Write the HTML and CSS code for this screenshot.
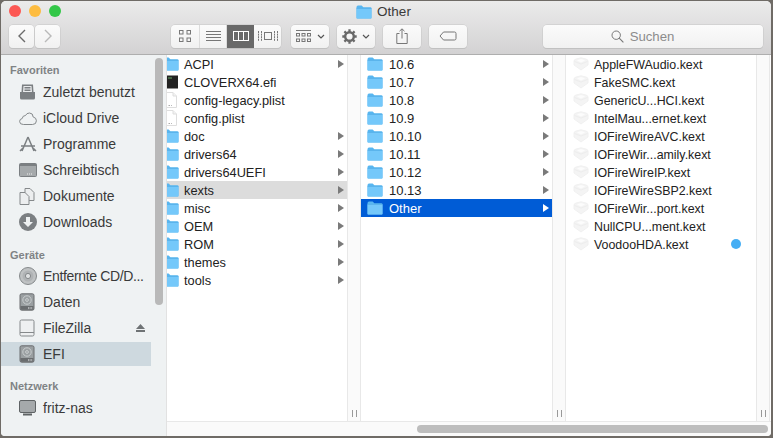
FILE: index.html
```html
<!DOCTYPE html>
<html lang="de">
<head>
<meta charset="utf-8">
<title>Other</title>
<link rel="stylesheet" href="styles.css">
</head>
<body>
<svg class="defs" width="0" height="0" aria-hidden="true">
  <defs>
    <symbol id="folder" viewBox="0 0 16 14">
      <path d="M0.5 2.2Q0.5 0.6 2 0.6H5.6L7.4 2.2H14.2Q15.5 2.2 15.5 3.6V12.4Q15.5 13.6 14.2 13.6H1.8Q0.5 13.6 0.5 12.4Z" fill="#58b6f0"/>
      <path d="M0.5 3.4H15.5V12.4Q15.5 13.6 14.2 13.6H1.8Q0.5 13.6 0.5 12.4Z" fill="#74c8fa"/>
      <path d="M0.5 3.4H15.5" stroke="#4fa9e4" stroke-width=".6"/>
    </symbol>
    <symbol id="doc" viewBox="0 0 14 16">
      <path d="M2.5 .5H9L12.5 4V15.5H2.5Z" fill="#fff" stroke="#dedede"/>
      <path d="M9 .5V4H12.5" fill="#f3f3f3" stroke="#dedede"/>
      <path d="M4.5 13.5H6M7 13.5H7.8" stroke="#aaa"/>
    </symbol>
    <symbol id="kext" viewBox="0 0 16 14">
      <path d="M1 4Q1 2.500 3 2L8 .8L13 2Q15 2.500 15 4V8L8 13L1 8Z" fill="#f4f4f4" stroke="#f0f0f0"/>
      <path d="M1.500 4.500L8 7L14.500 4.500" fill="none" stroke="#ededed"/>
      <path d="M4 3.600L8 5.400L12 3.600L8 2Z" fill="#fcfcfc"/>
    </symbol>
    <symbol id="disk" viewBox="0 0 16 18">
      <rect x="1" y=".8" width="14" height="16.4" rx="1.6" fill="#9a9fa1" stroke="#6a6d6f"/>
      <rect x="1.5" y="13" width="13" height="3.8" fill="#6a6d6f"/>
      <circle cx="8" cy="7" r="4.2" fill="none" stroke="#c9cdce"/>
      <circle cx="8" cy="7" r="1.4" fill="none" stroke="#c9cdce"/>
      <path d="M9 14.6H13.4M9 15.6H13.4" stroke="#b5b8ba" stroke-dasharray="1 .6"/>
    </symbol>
  </defs>
</svg>
<div class="window">
  <header class="chrome">
    <div class="titlebar">
      <div class="lights">
        <span class="light red"></span><span class="light yellow"></span><span class="light green"></span>
      </div>
      <div class="title">
        <svg class="title-folder" width="16" height="14"><use href="#folder"/></svg>
        <span>Other</span>
      </div>
    </div>
    <div class="toolbar">
      <div class="btn-group nav">
        <button class="btn back"><svg width="10" height="14" viewBox="0 0 10 14"><path d="M8 1L2 7L8 13" fill="none" stroke="#6b6b6b" stroke-width="1.4"/></svg></button>
        <button class="btn fwd"><svg width="10" height="14" viewBox="0 0 10 14"><path d="M2 1L8 7L2 13" fill="none" stroke="#b9b9b9" stroke-width="1.4"/></svg></button>
      </div>
      <div class="view-group">
        <button class="view v1"><svg width="14" height="14" viewBox="0 0 14 14"><g fill="none" stroke="#777"><rect x="1.5" y="1.5" width="3.500" height="3.500"/><rect x="9" y="1.5" width="3.500" height="3.500"/><rect x="1.5" y="9" width="3.500" height="3.500"/><rect x="9" y="9" width="3.500" height="3.500"/></g></svg></button>
        <button class="view v2"><svg width="15" height="13" viewBox="0 0 15 13"><path d="M0 1.5H15M0 4.5H15M0 7.5H15M0 10.5H15" stroke="#777"/></svg></button>
        <button class="view v3 on"><svg width="16" height="12" viewBox="0 0 16 12"><g fill="none" stroke="#fff"><rect x=".5" y="1.5" width="15" height="9"/><path d="M5.5 1.5V10.5M10.5 1.5V10.5"/></g></svg></button>
        <button class="view v4"><svg width="20" height="12" viewBox="0 0 20 12"><g fill="none" stroke="#777"><rect x="6.5" y="2.5" width="7" height="7"/><path d="M.5 1V11M3.5 1V11M16.5 1V11M19.5 1V11" stroke-dasharray="2 .6"/></g></svg></button>
      </div>
      <button class="btn arrange"><svg width="15" height="14" viewBox="0 0 15 14"><g fill="none" stroke="#777"><path d="M0 1.5H15" /><rect x=".5" y="4.5" width="3" height="2.5"/><rect x="6" y="4.5" width="3" height="2.5"/><rect x="11.5" y="4.5" width="3" height="2.5"/><rect x=".5" y="10" width="3" height="2.5"/><rect x="6" y="10" width="3" height="2.5"/><rect x="11.5" y="10" width="3" height="2.5"/></g></svg><svg class="chev" width="8" height="5" viewBox="0 0 8 5"><path d="M1 1L4 4L7 1" fill="none" stroke="#555" stroke-width="1.2"/></svg></button>
      <button class="btn action"><svg width="15" height="15" viewBox="0 0 15 15"><circle cx="7.5" cy="7.5" r="4.300" fill="none" stroke="#6a6a6a" stroke-width="2.400"/><path d="M7.500 .3V14.700M.3 7.500H14.700M2.400 2.400L12.600 12.600M12.600 2.400L2.400 12.600" stroke="#6a6a6a" stroke-width="2.300" stroke-dasharray="3 8.500 3 0"/></svg><svg class="chev" width="8" height="5" viewBox="0 0 8 5"><path d="M1 1L4 4L7 1" fill="none" stroke="#555" stroke-width="1.2"/></svg></button>
      <button class="btn share"><svg width="12" height="16" viewBox="0 0 12 16"><path d="M3.5 5.5H.8V15.5H11.2V5.5H8.5M6 10.5V1M3.5 3.2L6 .8L8.5 3.2" fill="none" stroke="#777"/></svg></button>
      <button class="btn tag"><svg width="18" height="10" viewBox="0 0 18 10"><path d="M4.5 1H15.5Q17 1 17 2.5V7.5Q17 9 15.5 9H4.5L1 5Z" fill="none" stroke="#777"/></svg></button>
      <div class="search">
        <svg width="13" height="13" viewBox="0 0 13 13"><circle cx="5.2" cy="5.2" r="4.2" fill="none" stroke="#777"/><path d="M8.2 8.2L12.4 12.4" stroke="#777" stroke-width="1.1"/></svg>
        <span>Suchen</span>
      </div>
    </div>
  </header>
  <div class="body">
    <aside class="sidebar">
      <div class="scroll-thumb"></div>
      <div class="side-head first">Favoriten</div>
      <div class="side-row"><svg class="sic" width="17" height="16" viewBox="0 0 17 16"><path d="M3 .5H14L14.5 8H16V14Q16 15.5 14.5 15.5H2.500Q1 15.500 1 14V8H2.500Z" fill="#7b7f82"/><path d="M4.500 2H12.500L13 8H4Z" fill="#e8eaeb"/><path d="M5.500 3.500H11.500M5.500 5H11.500M5.500 6.500H11.500" stroke="#7b7f82"/></svg><span>Zuletzt benutzt</span></div>
      <div class="side-row"><svg class="sic" width="18" height="13" viewBox="0 0 18 13"><path d="M4.500 12.500Q.6 12.500.6 9.500Q.6 7 3.200 6.500Q3.600 3.500 6.500 3.500Q7.500 1 10.500 1Q14 1 14.200 5Q17.400 5.600 17.400 8.800Q17.400 12.500 13.500 12.500Z" fill="none" stroke="#85898b"/></svg><span>iCloud Drive</span></div>
      <div class="side-row"><svg class="sic" width="18" height="17" viewBox="0 0 18 17"><path d="M9 1L3 15M9 1L15 15M2 10H16M1 15L4 12M17 15L14 12" fill="none" stroke="#7b7f82" stroke-width="1.500"/></svg><span>Programme</span></div>
      <div class="side-row"><svg class="sic" width="18" height="14" viewBox="0 0 18 14"><rect x=".5" y=".5" width="17" height="13" rx="1" fill="#a5a9ab" stroke="#7b7f82"/><rect x="1" y="1" width="16" height="2" fill="#7b7f82"/><path d="M8 11H13" stroke="#eee" stroke-dasharray="1 1"/></svg><span>Schreibtisch</span></div>
      <div class="side-row"><svg class="sic" width="16" height="17" viewBox="0 0 16 17"><path d="M6 .5H11L15 4.500V12.500H6Z" fill="#eceeef" stroke="#85898b"/><path d="M1 4.500H6L10 8.500V16.500H1Z" fill="#eceeef" stroke="#85898b"/></svg><span>Dokumente</span></div>
      <div class="side-row"><svg class="sic" width="18" height="18" viewBox="0 0 18 18"><circle cx="9" cy="9" r="9" fill="#7b7f82"/><path d="M7 4H11V9H14L9 14L4 9H7Z" fill="#eef1f2"/></svg><span>Downloads</span></div>
      <div class="side-head">Geräte</div>
      <div class="side-row"><svg class="sic" width="18" height="18" viewBox="0 0 18 18"><circle cx="9" cy="9" r="8.500" fill="#bfc2c3" stroke="#85898b"/><circle cx="9" cy="9" r="5.500" fill="#b0b3b5"/><circle cx="9" cy="9" r="2.600" fill="#dfe1e2" stroke="#85898b"/></svg><span class="tight">Entfernte CD/D...</span></div>
      <div class="side-row"><svg class="sic" width="16" height="18"><use href="#disk"/></svg><span>Daten</span></div>
      <div class="side-row"><svg class="sic" width="16" height="18" viewBox="0 0 16 18"><path d="M2.500 1H13.500Q15 1 15 2.500V15.500Q15 17 13.500 17H2.500Q1 17 1 15.500V2.500Q1 1 2.500 1Z" fill="#eef0f1" stroke="#85898b"/><path d="M1 13.500H15" stroke="#85898b"/></svg><span>FileZilla</span><svg class="eject" width="9" height="8" viewBox="0 0 9 8"><path d="M4.500 0L9 5H0Z M0 6H9V8H0Z" fill="#6f7375"/></svg></div>
      <div class="side-row sel"><svg class="sic" width="16" height="18"><use href="#disk"/></svg><span>EFI</span></div>
      <div class="side-head net">Netzwerk</div>
      <div class="side-row"><svg class="sic" width="17" height="16" viewBox="0 0 17 16"><rect x=".5" y=".5" width="16" height="12" rx="1.500" fill="#a5a9ab" stroke="#5f6365"/><path d="M4 14.500H13" stroke="#5f6365" stroke-width="2"/></svg><span>fritz-nas</span></div>
    </aside>
    <main class="browser">
      <div class="columns">
        <section class="col c1">
          <div class="rows">
            <div class="row"><svg class="ic"><use href="#folder"/></svg><span class="nm">ACPI</span><i class="arr"></i></div>
            <div class="row"><svg class="ic" viewBox="0 0 16 14"><rect x="1" y=".5" width="14" height="13" fill="#222"/><path d="M5 3H9" stroke="#7c7" stroke-width=".8"/></svg><span class="nm">CLOVERX64.efi</span></div>
            <div class="row"><svg class="ic doc"><use href="#doc"/></svg><span class="nm">config-legacy.plist</span></div>
            <div class="row"><svg class="ic doc"><use href="#doc"/></svg><span class="nm">config.plist</span></div>
            <div class="row"><svg class="ic"><use href="#folder"/></svg><span class="nm">doc</span><i class="arr"></i></div>
            <div class="row"><svg class="ic"><use href="#folder"/></svg><span class="nm">drivers64</span><i class="arr"></i></div>
            <div class="row"><svg class="ic"><use href="#folder"/></svg><span class="nm">drivers64UEFI</span><i class="arr"></i></div>
            <div class="row hl"><svg class="ic"><use href="#folder"/></svg><span class="nm">kexts</span><i class="arr"></i></div>
            <div class="row"><svg class="ic"><use href="#folder"/></svg><span class="nm">misc</span><i class="arr"></i></div>
            <div class="row"><svg class="ic"><use href="#folder"/></svg><span class="nm">OEM</span><i class="arr"></i></div>
            <div class="row"><svg class="ic"><use href="#folder"/></svg><span class="nm">ROM</span><i class="arr"></i></div>
            <div class="row"><svg class="ic"><use href="#folder"/></svg><span class="nm">themes</span><i class="arr"></i></div>
            <div class="row"><svg class="ic"><use href="#folder"/></svg><span class="nm">tools</span><i class="arr"></i></div>
          </div>
          <div class="grip"><b></b><b></b></div>
        </section>
        <section class="col c2">
          <div class="rows">
            <div class="row"><svg class="ic"><use href="#folder"/></svg><span class="nm">10.6</span><i class="arr"></i></div>
            <div class="row"><svg class="ic"><use href="#folder"/></svg><span class="nm">10.7</span><i class="arr"></i></div>
            <div class="row"><svg class="ic"><use href="#folder"/></svg><span class="nm">10.8</span><i class="arr"></i></div>
            <div class="row"><svg class="ic"><use href="#folder"/></svg><span class="nm">10.9</span><i class="arr"></i></div>
            <div class="row"><svg class="ic"><use href="#folder"/></svg><span class="nm">10.10</span><i class="arr"></i></div>
            <div class="row"><svg class="ic"><use href="#folder"/></svg><span class="nm">10.11</span><i class="arr"></i></div>
            <div class="row"><svg class="ic"><use href="#folder"/></svg><span class="nm">10.12</span><i class="arr"></i></div>
            <div class="row"><svg class="ic"><use href="#folder"/></svg><span class="nm">10.13</span><i class="arr"></i></div>
            <div class="row on"><svg class="ic"><use href="#folder"/></svg><span class="nm">Other</span><i class="arr"></i></div>
          </div>
          <div class="grip"><b></b><b></b></div>
        </section>
        <section class="col c3">
          <div class="rows">
            <div class="row"><svg class="ic"><use href="#kext"/></svg><span class="nm">AppleFWAudio.kext</span></div>
            <div class="row"><svg class="ic"><use href="#kext"/></svg><span class="nm">FakeSMC.kext</span></div>
            <div class="row"><svg class="ic"><use href="#kext"/></svg><span class="nm">GenericU...HCI.kext</span></div>
            <div class="row"><svg class="ic"><use href="#kext"/></svg><span class="nm">IntelMau...ernet.kext</span></div>
            <div class="row"><svg class="ic"><use href="#kext"/></svg><span class="nm">IOFireWireAVC.kext</span></div>
            <div class="row"><svg class="ic"><use href="#kext"/></svg><span class="nm">IOFireWir...amily.kext</span></div>
            <div class="row"><svg class="ic"><use href="#kext"/></svg><span class="nm">IOFireWireIP.kext</span></div>
            <div class="row"><svg class="ic"><use href="#kext"/></svg><span class="nm">IOFireWireSBP2.kext</span></div>
            <div class="row"><svg class="ic"><use href="#kext"/></svg><span class="nm">IOFireWir...port.kext</span></div>
            <div class="row"><svg class="ic"><use href="#kext"/></svg><span class="nm">NullCPU...ment.kext</span></div>
            <div class="row"><svg class="ic"><use href="#kext"/></svg><span class="nm">VoodooHDA.kext</span><i class="dot"></i></div>
          </div>
          <div class="grip"><b></b><b></b></div>
        </section>
      </div>
      <div class="hscroll"><div class="hthumb"></div></div>
    </main>
  </div>
</div>
</body>
</html>
```

FILE: styles.css
```css
* { box-sizing: border-box; }
html, body { margin: 0; height: 100%; }
body {
  width: 773px;
  height: 438px;
  overflow: hidden;
  background: #6f6b66;
  font-family: "Liberation Sans", Arial, sans-serif;
  font-size: 13px;
  color: #222;
  padding: 1px 2px 2px 1px;
}
.defs { position: absolute; }
.window {
  width: 770px;
  height: 435px;
  border-radius: 5px 5px 4px 4px;
  overflow: hidden;
  display: flex;
  flex-direction: column;
  background: #fff;
}
.chrome {
  height: 54px;
  flex: none;
  background: linear-gradient(#ebebeb, #d3d2d3);
  border-bottom: 1px solid #aeaeae;
}
.titlebar { height: 22px; position: relative; display: flex; justify-content: center; align-items: center; }
.lights { position: absolute; left: 8px; top: 4px; display: flex; gap: 8px; }
.light { width: 12px; height: 12px; border-radius: 50%; }
.red { background: #fc5753; }
.yellow { background: #fdbc40; }
.green { background: #33c748; }
.title { display: flex; align-items: center; gap: 5px; font-size: 13.5px; color: #3a3a3a; margin-left: -5px; margin-top: -1px; }
.toolbar { display: flex; align-items: center; height: 24px; margin-top: 1px; padding-left: 8px; }
button { padding: 0; margin: 0; font: inherit; }
.btn, .view-group, .search {
  height: 23px;
  background: linear-gradient(#fbfbfb, #f1f1f1);
  border: none;
  border-radius: 4px;
  box-shadow: 0 0 0 .5px #c6c6c6, 0 1px 0 #bdbdbd;
  display: flex;
  align-items: center;
  justify-content: center;
}
.btn-group.nav { display: flex; gap: 1px; }
.back, .fwd { width: 25px; }
.view-group { margin-left: 111px; overflow: hidden; width: 110px; justify-content: flex-start; }
.view { height: 23px; border: none; background: none; display: flex; align-items: center; justify-content: center; border-right: 1px solid #dcdcdc; }
.v1 { width: 29px; }
.v2 { width: 27px; }
.v3 { width: 27px; }
.v4 { width: 27px; border-right: none; }
.view.on { background: #696969; border-right: none; }
.arrange { width: 38px; margin-left: 10px; gap: 6px; }
.action { width: 38px; margin-left: 8px; gap: 5px; }
.share { width: 38px; margin-left: 8px; }
.tag { width: 38px; margin-left: 8px; }
.search { width: 220px; margin-left: 76px; gap: 6px; color: #8c8c8c; font-size: 13.200px; padding-right: 21px; }
.body { flex: 1; display: flex; min-height: 0; }
.sidebar {
  width: 166px;
  flex: none;
  position: relative;
  background: #eff2f3;
  padding-top: 7px;
  border-right: 1px solid #e2e2e2;
}
.scroll-thumb { position: absolute; left: 154px; top: 3px; width: 8px; height: 247px; border-radius: 4px; background: #b9b9b9; }
.side-head { font-size: 11px; font-weight: 700; color: #7f8385; height: 16px; line-height: 16px; padding-left: 9px; margin-top: 12px; }
.side-head.first { margin-top: 0; height: 17px; }
.side-head.net { margin-top: 11px; height: 17px; }
.side-row { height: 26px; width: 150px; display: flex; align-items: center; color: #3a3a3a; font-size: 14px; position: relative; padding-left: 18px; }
.side-row span { position: absolute; left: 42px; white-space: nowrap; }
.side-row .tight { letter-spacing: -.35px; }
.sic { flex: none; }
.sel { background: linear-gradient(#ced9df, #ced9df) no-repeat center / 100% 24px; }
.eject { position: absolute; left: 135px; top: 9px; }
.browser { flex: 1; min-width: 0; display: flex; flex-direction: column; }
.columns { flex: 1; display: flex; min-height: 0; }
.col { display: flex; position: relative; height: 100%; }
.c1 { width: 194px; font-size: 12.8px; }
.c2 { width: 205px; font-size: 13px; }
.c3 { width: 204px; font-size: 12.4px; }
.rows { flex: 1; min-width: 0; overflow: hidden; }
.row { height: 18px; display: flex; align-items: center; padding-left: 1px; position: relative; white-space: nowrap; color: #222; }
.ic { width: 16px; height: 14px; flex: none; margin-left: -5px; }
.doc { height: 16px; }
.nm { position: absolute; left: 17px; }
.arr { position: absolute; right: 3px; top: 5px; width: 0; height: 0; border-left: 6px solid #7a7a7a; border-top: 4px solid transparent; border-bottom: 4px solid transparent; }
.hl { background: #dcdcdc; }
.on { background: #005cd6; }
.on .nm { color: #fff; }
.on .arr { border-left-color: #fff; }
.dot { position: absolute; right: 15px; top: 4px; width: 10px; height: 10px; border-radius: 50%; background: #45aef4; }
.c2 .nm { left: 28px; }
.c2 .ic { margin-left: 5px; }
.c3 .ic { margin-left: 6px; }
.c3 .nm { left: 28px; top: 3px; }
.grip {
  width: 14px;
  flex: none;
  background: #fafafa;
  border-left: 1px solid #e8e8e8;
  border-right: 1px solid #e8e8e8;
  display: flex;
  align-items: flex-end;
  justify-content: center;
  gap: 3px;
  padding-bottom: 4px;
}
.grip b { width: 1px; height: 7px; background: #999; }
.hscroll { height: 15px; flex: none; background: #fafafa; border-top: 1px solid #e8e8e8; position: relative; }
.hthumb { position: absolute; right: 3px; top: 3px; width: 351px; height: 8px; border-radius: 4px; background: #bdbdbd; }
```
